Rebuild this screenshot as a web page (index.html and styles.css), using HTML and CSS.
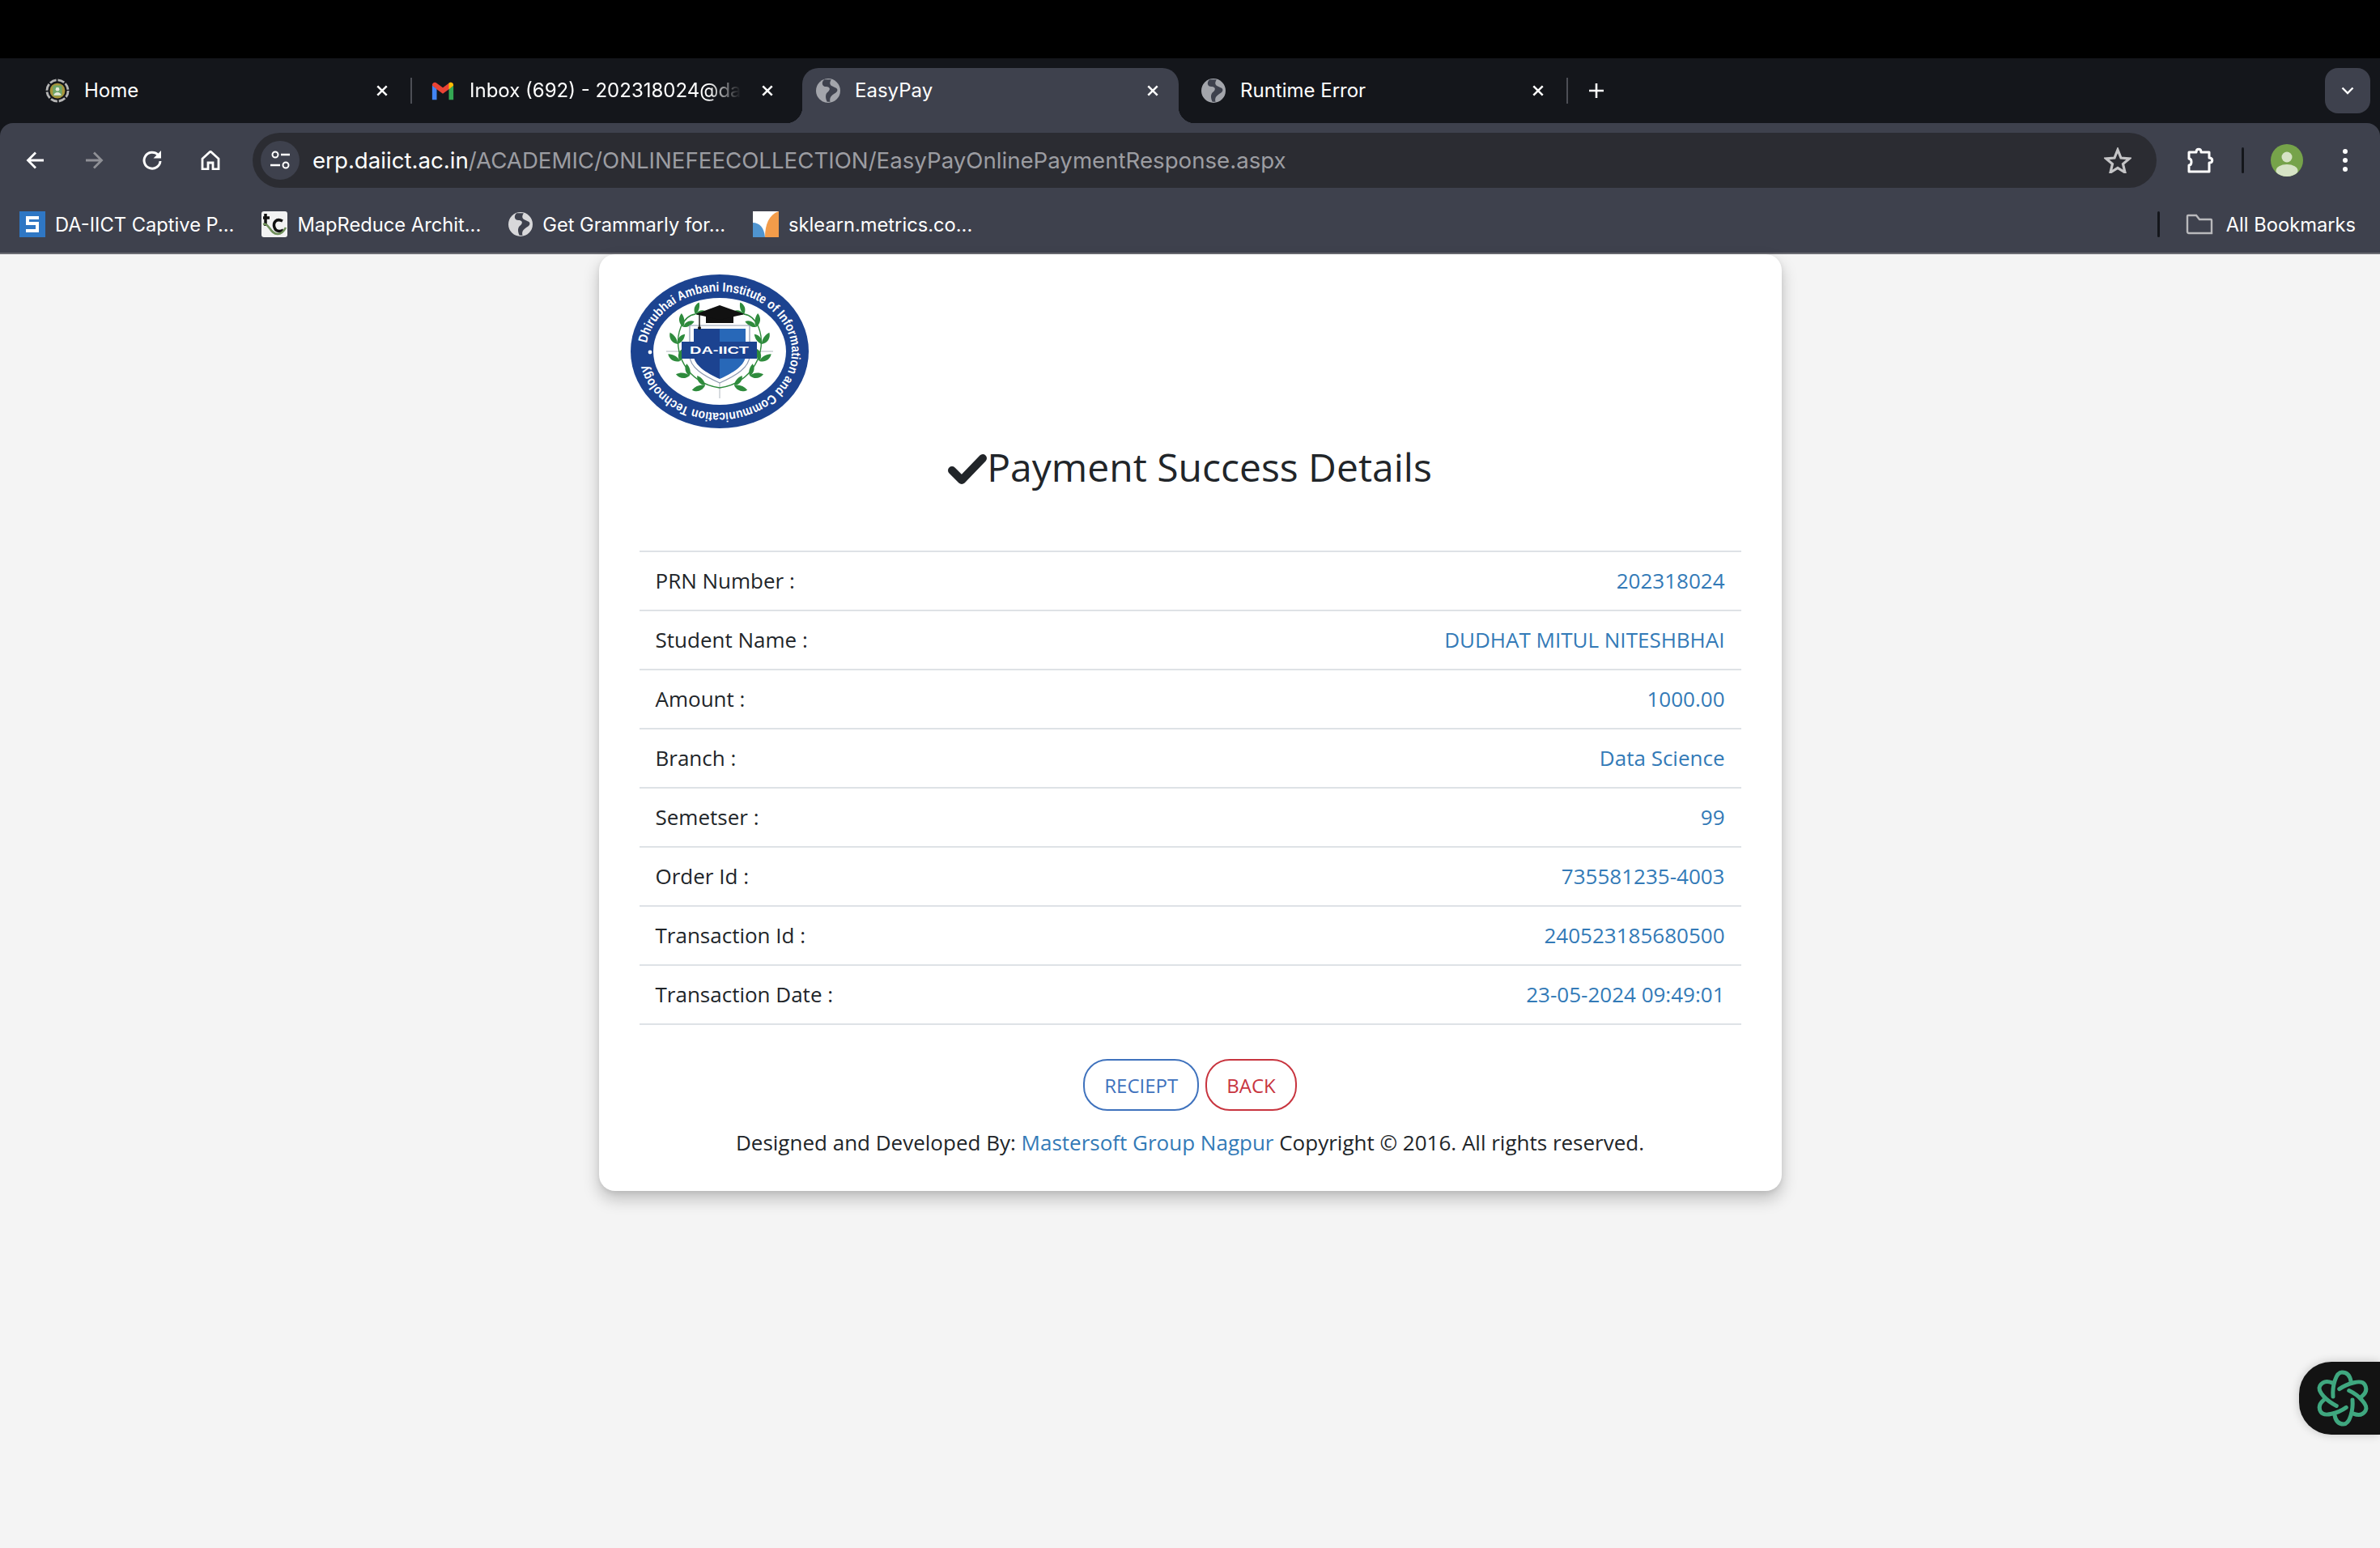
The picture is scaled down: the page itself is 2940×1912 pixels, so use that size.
FILE: index.html
```html
<!DOCTYPE html>
<html>
<head>
    <title>EasyPay</title>
    <link rel="stylesheet" href="styles.css">
</head>
<body>

    <svg class="defs" width="0" height="0">
        <defs>
            <g id="globe">
                <circle cx="12" cy="12" r="12" fill="#a3a5ab"/>
                <path d="M8 1 C5 4 6 8 10 8 C13 8 15 10 12 13 C9 15 9 19 11 23 L14 23 C13 19 15 17 18 15 C22 13 22 10 19 9 L15 7 C13 5 14 3 15 1 Z" fill="#3e414d"/>
            </g>
            <path id="close" d="M2 2 L12 12 M12 2 L2 12" stroke="#fff" stroke-width="2.2" fill="none"/>
            <path id="leaf" d="M0 0 C5 -6 13 -6 18 -1 C12 3 5 3 0 0 Z" fill="#2e8b3c"/>
            <path id="hook" d="M-12 -2 C-13 -14 -9 -32 -1 -32 C6 -32 9 -27 10 -21" fill="none" stroke="#3fa77f" stroke-width="5" stroke-linecap="round"/>
        </defs>
    </svg>

    <!-- Browser window -->
    <div class="topbar"></div>

    <div class="chrome">
        <div class="tabstrip">
            <div class="tab">
                <svg class="favicon" viewBox="0 0 32 32">
                    <circle cx="16" cy="16" r="14" fill="none" stroke="#b5b5b5" stroke-width="3" stroke-dasharray="9 2"/>
                    <circle cx="16" cy="16" r="10" fill="#a8953a"/>
                    <rect x="10" y="9" width="12" height="14" rx="2" fill="#6fa56a"/>
                    <circle cx="16" cy="14" r="2.5" fill="#e4e8d8"/>
                    <path d="M11 22 C12 17 20 17 21 22 Z" fill="#e4e8d8"/>
                </svg>
                <span class="tab-title">Home</span>
                <svg class="tab-close" viewBox="0 0 14 14"><use href="#close"/></svg>
            </div>
            <span class="tab-sep"></span>
            <div class="tab">
                <svg class="favicon" viewBox="0 0 32 24">
                    <path d="M2 24 V5 L8 9 V24 Z" fill="#4285f4"/>
                    <path d="M24 24 V9 L30 5 V24 Z" fill="#34a853"/>
                    <path d="M2 5 C2 1 6 0 8 2 L16 8 L24 2 C26 0 30 1 30 5 L24 10 L16 16 L8 10 Z" fill="#ea4335"/>
                    <path d="M24 2 C26 0 30 1 30 5 L24 10 Z" fill="#fbbc04"/>
                </svg>
                <span class="tab-title tab-title-fade">Inbox (692) - 202318024@da</span>
                <svg class="tab-close" viewBox="0 0 14 14"><use href="#close"/></svg>
            </div>
            <span class="tab-sep tab-sep-hidden"></span>
            <div class="tab tab-active">
                <svg class="favicon" viewBox="0 0 24 24"><use href="#globe"/></svg>
                <span class="tab-title">EasyPay</span>
                <svg class="tab-close" viewBox="0 0 14 14"><use href="#close"/></svg>
            </div>
            <span class="tab-sep tab-sep-hidden"></span>
            <div class="tab">
                <svg class="favicon" viewBox="0 0 24 24"><use href="#globe"/></svg>
                <span class="tab-title">Runtime Error</span>
                <svg class="tab-close" viewBox="0 0 14 14"><use href="#close"/></svg>
            </div>
            <span class="tab-sep"></span>
            <svg class="new-tab" viewBox="0 0 20 20"><path d="M10 1 V19 M1 10 H19" stroke="#fff" stroke-width="2.6"/></svg>
            <div class="tab-search">
                <svg viewBox="0 0 16 10" width="16" height="10"><path d="M1.5 1.5 L8 8 L14.5 1.5" stroke="#fff" stroke-width="2.4" fill="none"/></svg>
            </div>
        </div>

        <div class="toolbar">
            <div class="nav-icons">
                <svg viewBox="0 0 24 24"><path d="M22 12 H3 M12 2.5 L2.5 12 L12 21.5" stroke="#fff" stroke-width="2.8" fill="none"/></svg>
                <svg viewBox="0 0 24 24"><path d="M2 12 H21 M12 2.5 L21.5 12 L12 21.5" stroke="#8f9096" stroke-width="2.8" fill="none"/></svg>
                <svg viewBox="0 0 24 24"><path d="M22 13 A10 10 0 1 1 19 5" stroke="#fff" stroke-width="3" fill="none"/><path d="M23 0 V9.5 H13.5 Z" fill="#fff"/></svg>
                <svg viewBox="0 0 24 24"><path d="M2 23 V10 L12 1 L22 10 V23 H15 V15 H9 V23 Z" stroke="#fff" stroke-width="2.8" fill="none"/></svg>
            </div>
            <div class="urlbar">
                <span class="site-info">
                    <svg viewBox="0 0 26 24" width="26" height="24">
                        <circle cx="7" cy="5" r="3.5" stroke="#fff" stroke-width="2" fill="none"/>
                        <path d="M14 5 H25 M1 18 H13" stroke="#fff" stroke-width="2.4"/>
                        <circle cx="20" cy="18" r="3.5" stroke="#fff" stroke-width="2" fill="none"/>
                    </svg>
                </span>
                <span class="url"><span class="url-host">erp.daiict.ac.in</span>/ACADEMIC/ONLINEFEECOLLECTION/EasyPayOnlinePaymentResponse.aspx</span>
                <svg class="star" viewBox="0 0 34 32" width="34" height="32"><path d="M17 3 L21 13 L31.5 13.8 L23.5 20.5 L26 31 L17 25.3 L8 31 L10.5 20.5 L2.5 13.8 L13 13 Z" stroke="#c4c4c6" stroke-width="3.2" fill="none"/></svg>
            </div>
            <div class="toolbar-right">
                <svg class="ext-icon" viewBox="0 0 34 34" width="34" height="34"><path d="M3 7 H12 C12 2 18 2 18 7 H28 V14 C33 14 33 20 28 20 V31 H3 V23 C7 23 7 15 3 15 Z" stroke="#fff" stroke-width="3" stroke-linejoin="round" fill="none"/></svg>
                <span class="toolbar-sep"></span>
                <svg class="avatar" viewBox="0 0 40 40" width="40" height="40">
                    <defs><clipPath id="avatarClip"><circle cx="20" cy="20" r="20"/></clipPath></defs>
                    <circle cx="20" cy="20" r="20" fill="#76a34a"/>
                    <g clip-path="url(#avatarClip)" fill="#d6e3c5">
                        <circle cx="20" cy="16" r="6.5"/>
                        <ellipse cx="20" cy="33" rx="13.5" ry="8"/>
                    </g>
                </svg>
                <svg class="menu-dots" viewBox="0 0 6 28" width="6" height="28"><circle cx="3" cy="3" r="3" fill="#fff"/><circle cx="3" cy="14" r="3" fill="#fff"/><circle cx="3" cy="25" r="3" fill="#fff"/></svg>
            </div>
        </div>

        <div class="bookmarks">
            <div class="bookmark">
                <svg viewBox="0 0 32 32" width="32" height="32"><rect width="32" height="32" fill="#2f77c4"/><path d="M24 8 H10 V15 H22 V24 H8" stroke="#fff" stroke-width="4" fill="none"/></svg>
                DA-IICT Captive P...
            </div>
            <div class="bookmark">
                <svg viewBox="0 0 32 32" width="32" height="32"><rect width="32" height="32" rx="3" fill="#f2f2f2"/><path d="M5 3 V18 M2 8 H10" stroke="#111" stroke-width="3.5"/><path d="M26 12 C18 8 14 14 16 20 C18 26 24 25 27 23" stroke="#111" stroke-width="3.5" fill="none"/><path d="M2 16 C10 14 10 28 20 28 C25 28 28 24 30 20" stroke="#6f8f5a" stroke-width="2.6" fill="none"/></svg>
                MapReduce Archit...
            </div>
            <div class="bookmark">
                <svg viewBox="0 0 24 24" width="30" height="30"><circle cx="12" cy="12" r="12" fill="#d8d8da"/><path d="M8 1 C5 4 6 8 10 8 C13 8 15 10 12 13 C9 15 9 19 11 23 L14 23 C13 19 15 17 18 15 C22 13 22 10 19 9 L15 7 C13 5 14 3 15 1 Z" fill="#3e414d"/></svg>
                Get Grammarly for...
            </div>
            <div class="bookmark">
                <svg viewBox="0 0 32 32" width="32" height="32"><rect width="32" height="32" fill="#fff"/><path d="M32 0 C20 4 15 16 15 32 H32 Z" fill="#f39c4a"/><path d="M0 14 C8 14 14 20 15 32 H0 Z" fill="#4f94cf"/></svg>
                sklearn.metrics.co...
            </div>
            <span class="bookmarks-space"></span>
            <span class="bookmarks-sep"></span>
            <div class="bookmark bookmark-all">
                <svg viewBox="0 0 34 26" width="34" height="26"><path d="M2 22 V3 Q2 2 3 2 H13 L17 7 H31 Q32 7 32 8 V24 H4 Q2 24 2 22 Z" stroke="#b9b9bc" stroke-width="2.4" fill="none"/></svg>
                All Bookmarks
            </div>
        </div>
    </div>

    <!-- Page content -->
    <div class="page">
        <div class="card">
            <svg class="logo" viewBox="0 0 220 190" width="220" height="190">
                <ellipse cx="110" cy="95" rx="110" ry="95" fill="#1c4390"/>
                <ellipse cx="110" cy="95" rx="82" ry="66" fill="#fff"/>
                <path id="logoArc" d="M20 85 A90 75 0 1 1 20 107" fill="none"/>
                <text class="logo-ring"><textPath href="#logoArc" textLength="492" lengthAdjust="spacingAndGlyphs">Dhirubhai Ambani Institute of Information and Communication Technology</textPath></text>
                <circle cx="24" cy="96" r="2.4" fill="#fff"/>
                <path d="M110 134 V153 M44 95 H64 M156 95 H176" stroke="#9aa3ad" stroke-width="0.8"/>
                <g id="laurel">
                    <path d="M110 140 C70 135 50 95 62 65 C66 56 72 50 80 49" stroke="#2e8b3c" stroke-width="1.4" fill="none"/>
                    <use href="#leaf" transform="translate(92 137) rotate(164) scale(.95)"/>
                    <use href="#leaf" transform="translate(92 137) rotate(234) scale(.85)"/>
                    <use href="#leaf" transform="translate(73 125) rotate(189) scale(.95)"/>
                    <use href="#leaf" transform="translate(73 125) rotate(259) scale(.85)"/>
                    <use href="#leaf" transform="translate(61 107) rotate(214) scale(.95)"/>
                    <use href="#leaf" transform="translate(61 107) rotate(284) scale(.85)"/>
                    <use href="#leaf" transform="translate(58 86) rotate(240) scale(.95)"/>
                    <use href="#leaf" transform="translate(58 86) rotate(310) scale(.85)"/>
                    <use href="#leaf" transform="translate(65 65) rotate(266) scale(.95)"/>
                    <use href="#leaf" transform="translate(65 65) rotate(336) scale(.85)"/>
                    <use href="#leaf" transform="translate(80 49) rotate(291) scale(.85)"/>
                    <use href="#leaf" transform="translate(80 49) rotate(355) scale(.85)"/>
                </g>
                <use href="#laurel" transform="translate(220 0) scale(-1 1)"/>
                <path d="M73 63 H147 V100 C147 115 130 125 110 134 C90 125 73 115 73 100 Z" fill="#fff" stroke="#8d9ab0" stroke-width="1.2"/>
                <path d="M78 67 H110 V129 C94 122 78 112 78 100 Z" fill="#1c4390"/>
                <path d="M110 67 H142 V100 C142 112 126 122 110 129 Z" fill="#2868b8"/>
                <rect x="63" y="83" width="93" height="21" fill="#1c4390"/>
                <text class="logo-band" x="73" y="98" textLength="73" lengthAdjust="spacingAndGlyphs">DA-IICT</text>
                <path d="M93 48 H127 V60 H93 Z" fill="#111"/>
                <path d="M110 38 L141 49 L110 56 L80 49 Z" fill="#111"/>
                <path d="M85 50 V64" stroke="#111" stroke-width="1.4"/>
                <circle cx="85" cy="66" r="2" fill="#111"/>
            </svg>

            <h1 class="title">
                <svg class="title-check" viewBox="0 0 48 37" width="48" height="37"><path d="M5 20 L17 32 L43 5" stroke="#212529" stroke-width="10" stroke-linejoin="round" stroke-linecap="round" fill="none"/></svg>Payment Success Details
            </h1>

            <div class="details">
                <div class="detail-row"><span>PRN Number :</span><span class="detail-value">202318024</span></div>
                <div class="detail-row"><span>Student Name :</span><span class="detail-value">DUDHAT MITUL NITESHBHAI</span></div>
                <div class="detail-row"><span>Amount :</span><span class="detail-value">1000.00</span></div>
                <div class="detail-row"><span>Branch :</span><span class="detail-value">Data Science</span></div>
                <div class="detail-row"><span>Semetser :</span><span class="detail-value">99</span></div>
                <div class="detail-row"><span>Order Id :</span><span class="detail-value">735581235-4003</span></div>
                <div class="detail-row"><span>Transaction Id :</span><span class="detail-value">240523185680500</span></div>
                <div class="detail-row"><span>Transaction Date :</span><span class="detail-value">23-05-2024 09:49:01</span></div>
            </div>

            <div class="actions">
                <a class="btn btn-blue">RECIEPT</a>
                <a class="btn btn-red">BACK</a>
            </div>

            <p class="credits">Designed and Developed By: <a class="credits-link">Mastersoft Group Nagpur</a> Copyright © 2016. All rights reserved.</p>
        </div>
    </div>

    <!-- Floating widget -->
    <div class="float-widget">
        <svg viewBox="-35 -35 70 70" width="70" height="70">
            <use href="#hook"/>
            <use href="#hook" transform="rotate(60)"/>
            <use href="#hook" transform="rotate(120)"/>
            <use href="#hook" transform="rotate(180)"/>
            <use href="#hook" transform="rotate(240)"/>
            <use href="#hook" transform="rotate(300)"/>
        </svg>
    </div>

</body>
</html>
```

FILE: styles.css
```css
* {
    box-sizing: border-box;
}

html, body {
    margin: 0;
    height: 100%;
}

body {
    display: flex;
    flex-direction: column;
    height: 1912px;
    overflow: hidden;
    background-color: #f4f4f4;
    font-family: "Open Sans", sans-serif;
    color: #212529;
}

.defs {
    position: absolute;
}

/* Browser window */
.topbar {
    height: 72px;
    background-color: #000;
}

.chrome {
    background-color: #14161b;
}

.tabstrip {
    display: flex;
    align-items: flex-end;
    height: 80px;
    padding-left: 36px;
    font-family: Inter, sans-serif;
    font-size: 24px;
    color: #fff;
}

.tab {
    position: relative;
    display: flex;
    align-items: center;
    width: 468px;
    height: 68px;
    padding: 0 0 13px 20px;
    border-radius: 20px 20px 0 0;
}

.tab-active {
    width: 465px;
    margin-left: 3px;
    padding-left: 17px;
    background-color: #3e414d;
}

.tab-active:before,
.tab-active:after {
    content: "";
    position: absolute;
    bottom: 0;
    width: 20px;
    height: 20px;
}

.tab-active:before {
    left: -20px;
    background: radial-gradient(circle at 0 0, transparent 20px, #3e414d 20.5px);
}

.tab-active:after {
    right: -20px;
    background: radial-gradient(circle at 100% 0, transparent 20px, #3e414d 20.5px);
}

.favicon {
    flex: none;
    width: 30px;
    height: 30px;
}

.tab-title {
    flex: 1;
    margin-left: 18px;
    overflow: hidden;
    white-space: nowrap;
}

.tab-title-fade {
    -webkit-mask-image: linear-gradient(to right, #000 295px, transparent 335px);
    mask-image: linear-gradient(to right, #000 295px, transparent 335px);
}

.tab-close {
    flex: none;
    width: 16px;
    height: 16px;
    margin: 0 24px 0 12px;
}

.tab-sep {
    flex: none;
    width: 2px;
    height: 32px;
    margin: 0 3px 24px;
    background-color: #4c4e55;
}

.tab-sep-hidden {
    background-color: transparent;
}

.new-tab {
    flex: none;
    width: 20px;
    height: 20px;
    margin: 0 0 30px 22px;
}

.tab-search {
    display: flex;
    align-items: center;
    justify-content: center;
    width: 56px;
    height: 56px;
    margin: 0 12px 12px auto;
    border-radius: 16px;
    background-color: #3e414d;
}

.toolbar {
    display: flex;
    align-items: center;
    height: 92px;
    background-color: #3e414d;
    border-radius: 16px 16px 0 0;
}

.nav-icons {
    display: flex;
    gap: 48px;
    width: 312px;
    padding-left: 32px;
}

.nav-icons svg {
    width: 24px;
    height: 24px;
}

.urlbar {
    display: flex;
    align-items: center;
    width: 2352px;
    height: 68px;
    padding: 0 31px 0 10px;
    border-radius: 34px;
    background-color: #2b2c32;
}

.site-info {
    display: flex;
    align-items: center;
    justify-content: center;
    flex: none;
    width: 48px;
    height: 48px;
    border-radius: 50%;
    background-color: #3e414d;
}

.url {
    flex: 1;
    margin-left: 16px;
    font-family: Inter, sans-serif;
    font-size: 27.65px;
    color: #9c9da2;
    white-space: nowrap;
}

.url-host {
    color: #fff;
}

.toolbar-right {
    display: flex;
    align-items: center;
    padding-left: 37px;
}

.toolbar-sep {
    width: 3px;
    height: 32px;
    margin: 0 33px 0 34px;
    border-radius: 2px;
    background-color: #14161b;
}

.menu-dots {
    margin-left: 49px;
}

.bookmarks {
    display: flex;
    align-items: center;
    height: 70px;
    padding: 0 30px 2px 24px;
    border-bottom: 2px solid #6a6b72;
    background-color: #3e414d;
    font-family: Inter, sans-serif;
    font-size: 23.7px;
    color: #fff;
}

.bookmark {
    display: flex;
    align-items: center;
    gap: 12px;
    margin-right: 34px;
    white-space: nowrap;
}

.bookmarks-space {
    flex: 1;
}

.bookmarks-sep {
    width: 3px;
    height: 32px;
    margin-right: 32px;
    border-radius: 2px;
    background-color: #14161b;
}

.bookmark-all {
    margin-right: 0;
    gap: 16px;
}

/* Page content */
.page {
    flex: 1;
    display: flex;
    justify-content: center;
    align-items: flex-start;
}

.card {
    width: 1461px;
    height: 1157px;
    padding: 25px 50px 0;
    border-radius: 20px;
    background-color: #fff;
    box-shadow: 0 10px 20px rgba(0, 0, 0, 0.22), 0 2px 6px rgba(0, 0, 0, 0.08);
}

.logo {
    display: block;
    margin-left: -11px;
}

.title {
    display: flex;
    align-items: baseline;
    justify-content: center;
    height: 151px;
    margin: 0;
    padding-top: 15px;
    font-size: 48px;
    font-weight: 400;
    line-height: 65px;
}

.title-check {
    flex: none;
    align-self: flex-start;
    margin-top: 17px;
}

.details {
    border-top: 2px solid #dee2e6;
}

.detail-row {
    display: flex;
    justify-content: space-between;
    align-items: center;
    height: 73px;
    padding: 0 20px 2px;
    border-bottom: 2px solid #dee2e6;
    font-size: 26px;
}

.detail-value {
    color: #337ab7;
}

.actions {
    display: flex;
    justify-content: center;
    gap: 8px;
    margin-top: 42px;
}

.btn {
    display: flex;
    align-items: center;
    height: 64px;
    padding: 0 24px;
    border: 2px solid;
    border-radius: 30px;
    font-size: 24px;
}

.btn-blue {
    border-color: #3f72bd;
    color: #3f72bd;
}

.btn-red {
    border-color: #c8353f;
    color: #c8353f;
}

.credits {
    margin: 20px 0 0;
    font-size: 26px;
    line-height: 38px;
    text-align: center;
}

.credits-link {
    color: #337ab7;
}

/* Logo lettering */
.logo-ring {
    font-family: "Liberation Sans", sans-serif;
    font-size: 16px;
    font-weight: 700;
    fill: #fff;
}

.logo-band {
    font-family: "Liberation Sans", sans-serif;
    font-size: 13px;
    font-weight: 700;
    fill: #fff;
}

/* Floating widget */
.float-widget {
    position: absolute;
    top: 1682px;
    right: 0;
    display: flex;
    align-items: center;
    width: 100px;
    height: 90px;
    padding-left: 19px;
    border-radius: 40px 0 0 40px;
    background-color: #131313;
    box-shadow: 0 0 12px rgba(0, 0, 0, 0.2);
}
```
